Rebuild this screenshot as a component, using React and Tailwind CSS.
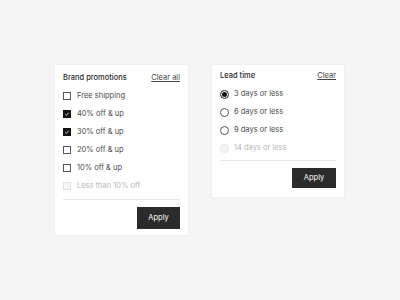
import React from "react";

const font = { fontFamily: "Inter, 'Noto Sans', sans-serif" };

function Check({ state }) {
  if (state === "checked")
    return (
      <span className="w-[8px] h-[8px] bg-[#111] flex items-center justify-center">
        <svg width="6" height="6" viewBox="0 0 6 6">
          <path d="M1.3 3.2 L2.5 4.3 L4.7 1.6" stroke="#fff" strokeWidth="0.8" fill="none" />
        </svg>
      </span>
    );
  if (state === "disabled")
    return <span className="w-[8px] h-[8px] border border-[#e2e2e2] bg-[#f7f7f7]" />;
  return <span className="w-[8px] h-[8px] border border-[#555]" />;
}

function Radio({ state }) {
  if (state === "checked")
    return (
      <span className="w-[9px] h-[9px] rounded-full border border-[#222] flex items-center justify-center">
        <span className="w-[5px] h-[5px] rounded-full bg-[#111]" />
      </span>
    );
  if (state === "disabled")
    return <span className="w-[9px] h-[9px] rounded-full border border-[#e5e5e5] bg-[#f5f5f5]" />;
  return <span className="w-[9px] h-[9px] rounded-full border border-[#555]" />;
}

export default function App() {
  const promos = [
    ["Free shipping", "empty"],
    ["40% off & up", "checked"],
    ["30% off & up", "checked"],
    ["20% off & up", "empty"],
    ["10% off & up", "empty"],
    ["Less than 10% off", "disabled"],
  ];
  const leads = [
    ["3 days or less", "checked"],
    ["6 days or less", "empty"],
    ["9 days or less", "empty"],
    ["14 days or less", "disabled"],
  ];
  return (
    <div className="w-[400px] h-[300px] bg-[#f5f5f5] flex items-start gap-[24px] pl-[55px] pt-[65px] text-[#333]" style={font}>
      <div className="w-[133px] bg-white shadow-[0_0_3px_rgba(0,0,0,0.06)] px-[8px] pt-[4px] pb-[6px] flex flex-col">
        <div className="h-[18px] flex items-center justify-between text-[7.5px]">
          <span className="font-medium text-[#2a2a2a]">Brand promotions</span>
          <span className="underline text-[#444]">Clear all</span>
        </div>
        {promos.map(([label, st]) => (
          <div key={label} className="h-[18px] flex items-center gap-[6px] text-[7.5px]">
            <Check state={st} />
            <span className={st === "disabled" ? "text-[#b8b8b8]" : "text-[#4a4a4a]"}>{label}</span>
          </div>
        ))}
        <div className="mt-[4px] border-t border-[#e6e6e6]" />
        <div className="flex justify-end mt-[7px]">
          <button className="w-[43px] h-[22px] bg-[#2b2b2b] text-white text-[7.5px]">Apply</button>
        </div>
      </div>
      <div className="w-[132px] bg-white shadow-[0_0_3px_rgba(0,0,0,0.06)] px-[8px] pt-[2px] pb-[9px] flex flex-col">
        <div className="h-[18px] flex items-center justify-between text-[7.5px]">
          <span className="font-medium text-[#2a2a2a]">Lead time</span>
          <span className="underline text-[#444]">Clear</span>
        </div>
        {leads.map(([label, st]) => (
          <div key={label} className="h-[18px] flex items-center gap-[5px] text-[7.5px]">
            <Radio state={st} />
            <span className={st === "disabled" ? "text-[#b8b8b8]" : "text-[#4a4a4a]"}>{label}</span>
          </div>
        ))}
        <div className="mt-[3px] border-t border-[#e6e6e6]" />
        <div className="flex justify-end mt-[7px]">
          <button className="w-[44px] h-[20px] bg-[#2b2b2b] text-white text-[7.5px]">Apply</button>
        </div>
      </div>
    </div>
  );
}
